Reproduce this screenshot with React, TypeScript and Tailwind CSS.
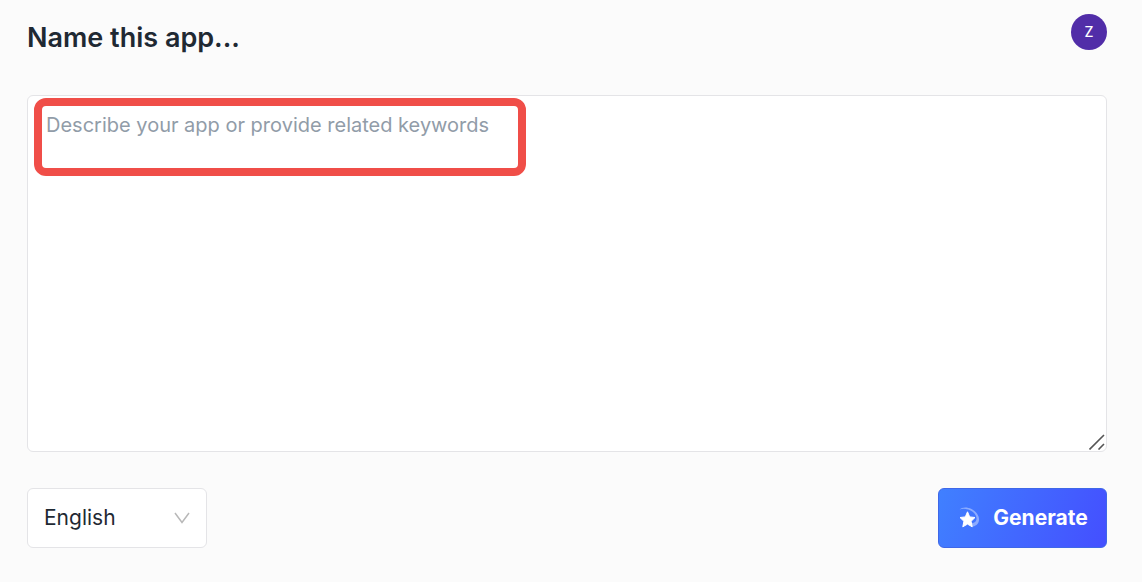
import React from 'react';

function StarIcon() {
  return (
    <svg className="h-6 w-6" viewBox="0 0 24 24" fill="none" aria-hidden="true">
      <path
        d="M2.500 3.500C5 1 10 .8 14.500 3c4.800 2.400 8 7 7.500 11.200-.500 4-3.600 6.300-7.500 6.300l-.5-3.500c3 .500 5.200-1.200 5.500-4 .300-3.400-2.500-6.800-6.500-8.700-3.800-1.800-7.500-2-10.500-.8z"
        fill="white"
        fillOpacity="0.4"
      />
      <path
        d="M10.500 5.800l2.200 5.100 5.300.6-3.900 3.800 1.100 5.500-4.700-2.700-4.700 2.700 1.100-5.500L3 11.500l5.300-.6z"
        fill="white"
        stroke="white"
        strokeWidth="1"
        strokeLinejoin="round"
      />
    </svg>
  );
}

function ResizeHandle() {
  return (
    <svg
      className="pointer-events-none absolute right-0.5 bottom-0.5 h-4 w-4"
      viewBox="0 0 16 16"
      fill="none"
      stroke="#555555"
      strokeWidth="1.6"
      aria-hidden="true"
    >
      <path d="M0.500 15.500L15 1M9.500 15.500L15 10" />
    </svg>
  );
}

export default function App() {
  const [description, setDescription] = React.useState('');
  const [language, setLanguage] = React.useState('English');

  return (
    <main className="min-h-screen bg-[#fbfbfb] pt-3.5 pr-[35px] pb-8 pl-[27px] font-['Inter',sans-serif] text-[#1f2933]">
      <header className="flex items-start justify-between">
        <h1 className="pt-1 text-[27px] leading-10 font-semibold">Name this app...</h1>
        <button
          type="button"
          aria-label="Account"
          className="flex h-9 w-9 items-center justify-center rounded-full bg-[#512da8] text-sm font-medium text-white"
        >
          Z
        </button>
      </header>

      <div className="relative mt-[37px]">
        <textarea
          aria-label="App description"
          value={description}
          onChange={(e) => setDescription(e.target.value)}
          placeholder="Describe your app or provide related keywords"
          className="block h-[357px] w-full resize-none rounded-md border border-[#e4e4e7] bg-white px-[18px] py-[13px] text-xl leading-8 placeholder:text-[#919ca8] focus:outline-none"
        />
        {/* Highlight around the prompt */}
        <div className="pointer-events-none absolute top-[3px] left-[7px] h-[78px] w-[492px] rounded-xl border-8 border-[#f04e48]" />
        <ResizeHandle />
      </div>

      <div className="mt-9 flex items-center justify-between">
        <div className="relative w-[180px]">
          <select
            aria-label="Language"
            value={language}
            onChange={(e) => setLanguage(e.target.value)}
            className="h-[60px] w-full appearance-none rounded-md border border-[#e4e4e7] bg-white pr-10 pl-4 text-[21px] focus:outline-none"
          >
            <option>English</option>
            <option>Spanish</option>
            <option>French</option>
          </select>
          <svg
            className="pointer-events-none absolute top-[22px] right-[17px] h-4 w-4"
            viewBox="0 0 16 16"
            fill="none"
            stroke="#b8b8b8"
            strokeWidth="1.500"
            aria-hidden="true"
          >
            <path d="M1 3l7 9.500L15 3" />
          </svg>
        </div>
        <button
          type="button"
          className="flex h-[60px] w-[169px] items-center justify-center gap-3 rounded-md border border-[#3f67e8] bg-linear-[110deg] from-[#4080ff] to-[#444fff] text-[21px] font-bold text-white"
        >
          <StarIcon />
          Generate
        </button>
      </div>
    </main>
  );
}
